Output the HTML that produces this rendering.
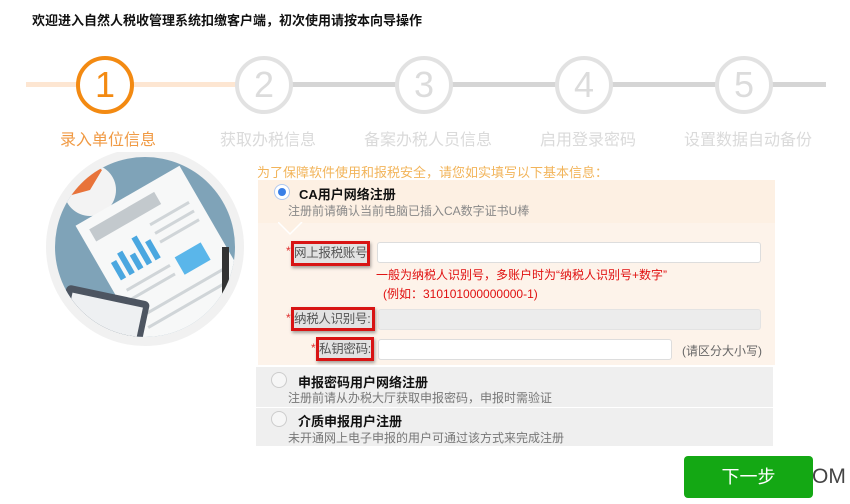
<!DOCTYPE html>
<html><head><meta charset="utf-8"><style>
*{margin:0;padding:0;box-sizing:border-box}
body{width:850px;height:504px;background:#fff;position:relative;overflow:hidden;font-family:"Liberation Sans","Noto Sans CJK SC",sans-serif}
.a{position:absolute;white-space:nowrap}
.circ{position:absolute;width:58px;height:58px;border-radius:50%;border:4px solid #e2e2e2;background:#fff;color:#dcdcdc;font-size:36px;font-weight:300;text-align:center;line-height:50px;top:56px}
.lbl{position:absolute;top:126px;font-size:16px;color:#dadada;width:160px;text-align:center}
.rb{position:absolute;border:3px solid #d81414;box-shadow:1px 2px 3px rgba(0,0,0,.35);background:#e2e2e2;font-size:12.5px;color:#555;line-height:18px;white-space:nowrap;overflow:hidden;letter-spacing:-0.3px}
.star{position:absolute;color:#e03030;font-size:12px}
.inp{position:absolute;background:#fff;border:1px solid #ddd;border-radius:3px;height:21px}
.radio{position:absolute;width:16px;height:16px;border-radius:50%;border:1px solid #ccc;background:#f6f6f6}
</style></head><body>
<div class="a" style="left:32px;top:10px;font-size:13px;font-weight:bold;color:#111">欢迎进入自然人税收管理系统扣缴客户端，初次使用请按本向导操作</div>
<div class="a" style="left:26px;top:82px;width:214px;height:5px;background:#fde6d2"></div>
<div class="a" style="left:240px;top:82px;width:586px;height:5px;background:#d5d5d5"></div>
<div class="circ" style="left:76px;border-color:#f38a12;color:#f38a12">1</div>
<div class="circ" style="left:235px">2</div>
<div class="circ" style="left:395px">3</div>
<div class="circ" style="left:555px">4</div>
<div class="circ" style="left:715px">5</div>
<div class="lbl" style="left:28px;color:#f09a44">录入单位信息</div>
<div class="lbl" style="left:188px">获取办税信息</div>
<div class="lbl" style="left:348px">备案办税人员信息</div>
<div class="lbl" style="left:508px">启用登录密码</div>
<div class="lbl" style="left:668px">设置数据自动备份</div>

<svg class="a" style="left:40px;top:152px" width="212" height="200" viewBox="0 0 212 200">
<defs><clipPath id="c"><circle cx="105" cy="95" r="90"/></clipPath></defs>
<circle cx="105" cy="95" r="99" fill="#f1f1f1"/>
<circle cx="105" cy="95" r="90" fill="#7fa3b8"/>
<g clip-path="url(#c)">
<circle cx="50" cy="38" r="26" fill="#f3f3f3"/>
<path d="M28 44 A22 22 0 0 1 62 18 L50 38Z" fill="#e8733a"/>
<g transform="rotate(-30 120 100)">
<rect x="60" y="35" width="120" height="165" fill="#f7f8f8"/>
<rect x="70" y="45" width="75" height="14" fill="#c3c9cd"/>
<rect x="72" y="85" width="6" height="20" fill="#4aa7e0"/><rect x="82" y="80" width="6" height="25" fill="#4aa7e0"/><rect x="92" y="88" width="6" height="17" fill="#4aa7e0"/><rect x="102" y="74" width="6" height="31" fill="#4aa7e0"/><rect x="112" y="84" width="6" height="21" fill="#4aa7e0"/>
<rect x="125" y="70" width="45" height="3" fill="#d0d5d8"/><rect x="125" y="80" width="45" height="3" fill="#d0d5d8"/><rect x="125" y="90" width="45" height="3" fill="#d0d5d8"/>
<rect x="130" y="112" width="30" height="20" fill="#5ab6ea"/>
<rect x="72" y="115" width="50" height="3" fill="#d0d5d8"/><rect x="72" y="125" width="50" height="3" fill="#d0d5d8"/><rect x="72" y="145" width="95" height="3" fill="#d0d5d8"/><rect x="72" y="158" width="95" height="3" fill="#d0d5d8"/>
</g>
<rect x="182" y="95" width="7" height="65" fill="#333"/>
<g transform="rotate(12 60 170)"><rect x="20" y="140" width="85" height="70" rx="5" fill="#4d5561"/><rect x="27" y="147" width="72" height="60" fill="#eef0f2"/></g>
</g>
</svg>

<div class="a" style="left:257px;top:162px;font-size:13px;color:#f2b45a">为了保障软件使用和报税安全，请您如实填写以下基本信息：</div>
<div class="a" style="left:258px;top:180px;width:517px;height:43px;background:#fdf0e3"></div>
<div class="a" style="left:258px;top:223px;width:517px;height:142px;background:#fdf3ea"></div>
<svg class="a" style="left:278px;top:222px" width="28" height="14"><path d="M0 0 L12 12 L24 0" fill="#fdf0e3" stroke="#fff" stroke-width="1.5"/></svg>
<div class="radio" style="left:274px;top:184px;border-color:#b0c8f0;background:#fff"><div style="position:absolute;left:3px;top:3px;width:8px;height:8px;border-radius:50%;background:#3a7fe6"></div></div>
<div class="a" style="left:299px;top:184px;font-size:13px;font-weight:bold;color:#111">CA用户网络注册</div>
<div class="a" style="left:288px;top:202px;font-size:12px;color:#888">注册前请确认当前电脑已插入CA数字证书U棒</div>

<div class="star" style="left:286px;top:244px">*</div>
<div class="rb" style="left:291px;top:241px;width:79px;height:25px">网上报税账号</div>
<div class="inp" style="left:377px;top:242px;width:384px"></div>
<div class="a" style="left:376px;top:266px;font-size:12px;color:#e01010">一般为纳税人识别号，多账户时为“纳税人识别号+数字”</div>
<div class="a" style="left:383px;top:285px;font-size:12px;color:#e01010">(例如：310101000000000-1)</div>

<div class="star" style="left:286px;top:311px">*</div>
<div class="rb" style="left:291px;top:307px;width:84px;height:24px">纳税人识别号:</div>
<div class="inp" style="left:378px;top:309px;width:383px;background:#ececec;border-color:#e3e3e3"></div>

<div class="star" style="left:311px;top:341px">*</div>
<div class="rb" style="left:316px;top:337px;width:58px;height:24px">私钥密码:</div>
<div class="inp" style="left:378px;top:339px;width:294px"></div>
<div class="a" style="left:682px;top:342px;font-size:12px;color:#666">(请区分大小写)</div>

<div class="a" style="left:256px;top:367px;width:517px;height:40px;background:#efefef"></div>
<div class="radio" style="left:271px;top:372px"></div>
<div class="a" style="left:298px;top:372px;font-size:13px;font-weight:bold;color:#111">申报密码用户网络注册</div>
<div class="a" style="left:288px;top:389px;font-size:12px;color:#777">注册前请从办税大厅获取申报密码，申报时需验证</div>
<div class="a" style="left:256px;top:408px;width:517px;height:38px;background:#efefef"></div>
<div class="radio" style="left:271px;top:411px"></div>
<div class="a" style="left:298px;top:411px;font-size:13px;font-weight:bold;color:#111">介质申报用户注册</div>
<div class="a" style="left:288px;top:429px;font-size:12px;color:#777">未开通网上电子申报的用户可通过该方式来完成注册</div>

<div class="a" style="left:684px;top:456px;width:129px;height:42px;background:#14a814;border-radius:4px;color:#fff;font-size:18px;text-align:center;line-height:42px">下一步</div>
<div class="a" style="left:812px;top:465px;font-size:21px;color:#444">OM</div>
</body></html>
